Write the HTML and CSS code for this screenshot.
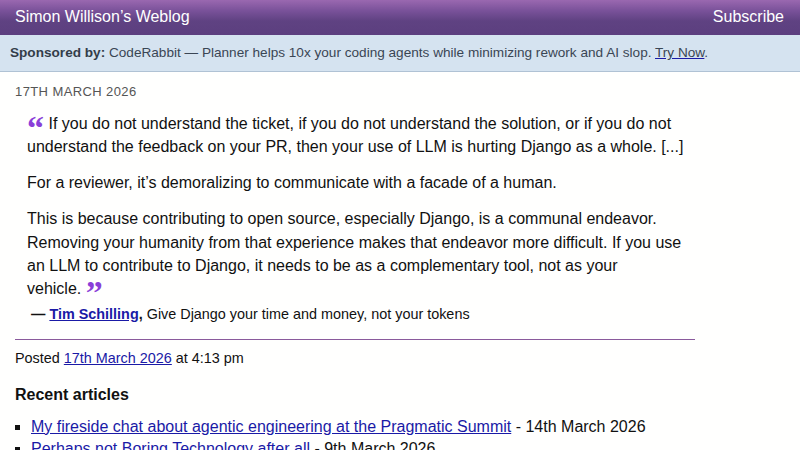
FILE: index.html
```html
<!DOCTYPE html>
<html lang="en">
<head>
<meta charset="utf-8">
<title>Simon Willison’s Weblog</title>
<link rel="stylesheet" href="styles.css">
</head>
<body>
<header class="masthead">
  <a class="site-title" href="#">Simon Willison’s Weblog</a>
  <a class="subscribe" href="#">Subscribe</a>
</header>
<div class="sponsor">
  <strong>Sponsored by:</strong> CodeRabbit — Planner helps 10x your coding agents while minimizing rework and AI slop. <a href="#">Try Now</a>.
</div>
<main class="content">
  <div class="date">17th March 2026</div>
  <blockquote class="quote">
    <p><span class="q-open">“</span> If you do not understand the ticket, if you do not understand the solution, or if you do not understand the feedback on your PR, then your use of LLM is hurting Django as a whole. [...]</p>
    <p>For a reviewer, it’s demoralizing to communicate with a facade of a human.</p>
    <p>This is because contributing to open source, especially Django, is a communal endeavor. Removing your humanity from that experience makes that endeavor more difficult. If you use an LLM to contribute to Django, it needs to be as a complementary tool, not as your <span class="nowrap">vehicle. <span class="q-close">”</span></span></p>
  </blockquote>
  <p class="cite"><strong>— <a href="#">Tim Schilling</a>,</strong> Give Django your time and money, not your tokens</p>
  <div class="posted">Posted <a href="#">17th March 2026</a> at 4:13 pm</div>
  <h3 class="recent-title">Recent articles</h3>
  <ul class="recent">
    <li><a href="#">My fireside chat about agentic engineering at the Pragmatic Summit</a> - 14th March 2026</li>
    <li><a href="#">Perhaps not Boring Technology after all</a> - 9th March 2026</li>
  </ul>
</main>
</body>
</html>
```
FILE: styles.css
```css
html, body {
  margin: 0;
  padding: 0;
  background: #fffffe;
  font-family: "Liberation Sans", Arial, sans-serif;
  color: #111;
}
a { color: #1a1aa6; }
.masthead {
  display: flex;
  justify-content: space-between;
  align-items: center;
  height: 35px;
  padding: 0 16px 0 15px;
  background: linear-gradient(to bottom, #9a68b0 0%, #7a529a 30%, #5f4282 60%, #5c3f7f 100%);
}
.masthead a {
  color: #fff;
  text-decoration: none;
  font-size: 16px;
  padding-bottom: 1px;
}
.sponsor {
  background: #d5e3f0;
  border-bottom: 1px solid #b0c2d4;
  color: #3a4654;
  font-size: 13.6px;
  height: 36px;
  line-height: 36px;
  padding: 0 10px;
  white-space: nowrap;
}
.sponsor strong { color: #333d49; }
.sponsor a {
  color: #3a4654;
  text-decoration-color: #1a1aa6;
}
.content {
  width: 680px;
  padding: 0 15px;
}
.date {
  margin-top: 12px;
  font-size: 13px;
  text-transform: uppercase;
  letter-spacing: 0.4px;
  color: #555;
}
.quote {
  margin: 13px 0 0 12px;
  font-size: 16px;
  line-height: 23.3px;
}
.quote p { margin: 0 0 12.8px 0; }
.quote p:last-child { margin-bottom: 0; }
.nowrap { white-space: nowrap; }
.q-open, .q-close {
  font-family: "Liberation Serif", "Times New Roman", serif;
  font-weight: bold;
  color: #8a3fd8;
  font-size: 34px;
  line-height: 0;
  vertical-align: -10px;
}
.cite {
  margin: 3px 0 0 16px;
  font-size: 14.4px;
  line-height: 20px;
}
.cite a { font-weight: bold; }
.posted {
  border-top: 1px solid #8a5a9c;
  margin-top: 15px;
  padding-top: 10px;
  font-size: 14.4px;
}
.recent-title {
  margin: 20px 0 0;
  font-size: 16px;
}
.recent {
  margin: 12px 0 0;
  padding-left: 16px;
  list-style: square;
  font-size: 16px;
  line-height: 22px;
}
```
